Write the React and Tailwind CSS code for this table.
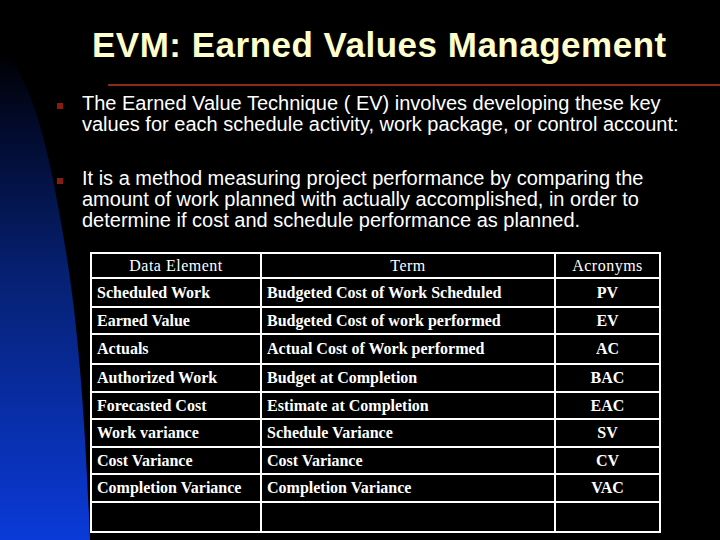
const rows = [
  ['Scheduled Work', 'Budgeted Cost of Work Scheduled', 'PV', 'h-[29px]'],
  ['Earned Value', 'Budgeted Cost of work performed', 'EV', 'h-[27px]'],
  ['Actuals', 'Actual Cost of Work performed', 'AC', 'h-[30px]'],
  ['Authorized Work', 'Budget at Completion', 'BAC', 'h-[28px]'],
  ['Forecasted Cost', 'Estimate at Completion', 'EAC', 'h-[27px]'],
  ['Work variance', 'Schedule Variance', 'SV', 'h-[28px]'],
  ['Cost Variance', 'Cost Variance', 'CV', 'h-[27px]'],
  ['Completion Variance', 'Completion Variance', 'VAC', 'h-[28px]'],
  ['', '', '', 'h-[28px]'],
];

function Backdrop() {
  return (
    <svg className="absolute inset-0" width="720" height="540" viewBox="0 0 720 540">
      <defs>
        <linearGradient id="blue" x1="0" y1="0" x2="0" y2="1">
          <stop offset="0" stopColor="#000000" />
          <stop offset="0.15" stopColor="#020a2a" />
          <stop offset="0.45" stopColor="#062070" />
          <stop offset="1" stopColor="#0a3ad8" />
        </linearGradient>
      </defs>
      <path d="M0 50 C 20 62, 40 110, 55 190 C 68 260, 82 330, 90 540 L 0 540 Z" fill="url(#blue)" />
    </svg>
  );
}

function Bullet({ children, className }) {
  return (
    <div className="flex">
      <div className="w-[82px] shrink-0 flex justify-end pr-[19px] pt-[10px]">
        <span className="block w-[6px] h-[6px] bg-[#8b1a10]" />
      </div>
      <p className={className}>{children}</p>
    </div>
  );
}

export default function App() {
  return (
    <div className="relative w-[720px] h-[540px] bg-black overflow-hidden">
      <Backdrop />
      <div className="relative flex flex-col">
        <h1 className="pt-[25px] pl-[92px] text-[35px] leading-[40px] tracking-[0.5px] font-bold text-[#ffffcc] font-['Liberation_Sans',Arial,sans-serif]">
          EVM: Earned Values Management
        </h1>
        <div className="ml-[108px] mt-[19px] h-[2px] bg-[#8a2a1c]" />

        <div className="mt-[7px] flex flex-col gap-[33px] font-['Liberation_Sans',Arial,sans-serif] text-white text-[20px] leading-[21px]">
          <Bullet className="w-[610px]">
            The Earned Value Technique ( EV) involves developing these key values for each schedule activity, work package, or control account:
          </Bullet>
          <Bullet className="w-[610px]">
            It is a method measuring project performance by comparing the amount of work planned with actually accomplished, in order to determine if cost and schedule performance as planned.
          </Bullet>
        </div>

        <div className="mt-[21px] ml-[90px] w-[571px] border-2 border-white font-['Liberation_Serif','Times_New_Roman',serif] text-white text-[16px]">
          <div className="flex h-[25px] items-center border-b-2 border-white tracking-[0.5px]">
            <div className="w-[170px] h-full flex items-center justify-center border-r-2 border-white">Data Element</div>
            <div className="w-[294px] h-full flex items-center justify-center border-r-2 border-white">Term</div>
            <div className="flex-1 h-full flex items-center justify-center">Acronyms</div>
          </div>
          {rows.map(([a, b, c, h], i) => (
            <div key={i} className={`flex font-bold ${h} ${i < rows.length - 1 ? 'border-b-2 border-white' : ''}`}>
              <div className="w-[170px] flex items-center pl-[5px] border-r-2 border-white">{a}</div>
              <div className="w-[294px] flex items-center pl-[5px] border-r-2 border-white">{b}</div>
              <div className="flex-1 flex items-center justify-center">{c}</div>
            </div>
          ))}
        </div>
      </div>
    </div>
  );
}
